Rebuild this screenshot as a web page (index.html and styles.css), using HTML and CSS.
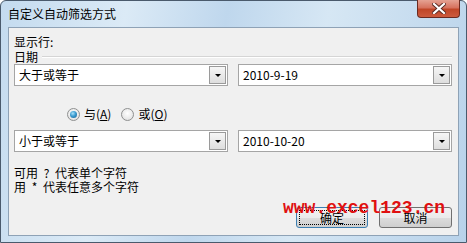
FILE: index.html
```html
<!DOCTYPE html>
<html lang="zh-CN">
<head>
<meta charset="utf-8">
<title>自定义自动筛选方式</title>
<link rel="stylesheet" href="styles.css">
</head>
<body>
<div class="window">
  <div class="titlebar">
    <span class="title">自定义自动筛选方式</span>
    <div class="close">
      <svg width="14" height="11" viewBox="0 0 14 11">
        <path d="M2 1 L12 10 M12 1 L2 10" stroke="#5a2a22" stroke-width="4" stroke-linecap="square"/>
        <path d="M2 1 L12 10 M12 1 L2 10" stroke="#ffffff" stroke-width="2.2" stroke-linecap="square"/>
      </svg>
    </div>
  </div>
  <div class="client">
    <div class="label">显示行:</div>
    <div class="group-label"><span>日期</span><div class="rule"></div></div>
    <div class="combo-row">
      <div class="combo"><span class="value">大于或等于</span><span class="drop"><span class="tri"></span></span></div>
      <div class="combo"><span class="value">2010-9-19</span><span class="drop"><span class="tri"></span></span></div>
    </div>
    <div class="radio-row">
      <div class="radio checked"><span class="dot"></span><span>与(<u>A</u>)</span></div>
      <div class="radio"><span class="dot"></span><span>或(<u>O</u>)</span></div>
    </div>
    <div class="combo-row second">
      <div class="combo"><span class="value">小于或等于</span><span class="drop"><span class="tri"></span></span></div>
      <div class="combo"><span class="value">2010-10-20</span><span class="drop"><span class="tri"></span></span></div>
    </div>
    <p class="hint">可用 ? 代表单个字符<br>用 * 代表任意多个字符</p>
    <div class="buttons">
      <div class="btn default"><span class="focus">确定</span></div>
      <div class="btn cancel">取消</div>
      <div class="watermark">www.excel123.cn</div>
    </div>
  </div>
</div>
</body>
</html>
```
FILE: styles.css
```css
* { box-sizing: border-box; }
html, body { margin: 0; padding: 0; }
body {
  width: 467px;
  height: 243px;
  overflow: hidden;
  background: #ffffff;
  font-family: "Noto Sans CJK SC", "Noto Sans", sans-serif;
  font-size: 12px;
  color: #000;
}
.window {
  position: relative;
  width: 467px;
  height: 243px;
  border: 1px solid #4a5a6c;
  border-radius: 6px 6px 0 0;
  background: linear-gradient(100deg, #c4dbef 0%, #dbeaf6 25%, #bfd7ed 45%, #d6e7f4 65%, #b8d2ea 100%);
  display: flex;
  flex-direction: column;
  padding: 0 7px 6px 7px;
}
.titlebar {
  height: 26px;
  display: flex;
  align-items: center;
  position: relative;
}
.title {
  line-height: 14px;
  color: #000;
}
.close {
  position: absolute;
  right: -1px;
  top: -1px;
  width: 43px;
  height: 18px;
  border: 1px solid #6b2a20;
  border-top: none;
  border-radius: 0 0 4px 4px;
  background: linear-gradient(#e5a293 0%, #d6725e 45%, #c04628 55%, #cc5b3e 100%);
  display: flex;
  align-items: center;
  justify-content: center;
}
.client {
  flex: 1;
  border: 1px solid #8ea2b6;
  background: #f0f0f0;
  padding: 6px 6px 0 5px;
  display: flex;
  flex-direction: column;
}
.label { line-height: 15px; }
.group-label {
  line-height: 15px;
  display: flex;
  align-items: center;
}
.rule {
  flex: 1;
  height: 2px;
  margin: 0 0 0 4px;
  border-top: 1px solid #d5d5d5;
  border-bottom: 1px solid #ffffff;
}
.combo-row {
  display: flex;
  gap: 10px;
}
.combo {
  width: 214px;
  height: 22px;
  border: 1px solid #a5a5a5;
  background: #fff;
  display: flex;
  align-items: center;
  padding: 1px;
}
.value {
  flex: 1;
  padding-left: 3px;
  line-height: 14px;
}
.drop {
  width: 17px;
  height: 100%;
  border: 1px solid #9a9a9a;
  background: linear-gradient(#f6f6f6, #dedede);
  display: flex;
  align-items: center;
  justify-content: center;
}
.tri {
  width: 0;
  height: 0;
  border-left: 3px solid transparent;
  border-right: 3px solid transparent;
  border-top: 3px solid #000;
}
.radio-row {
  margin-top: 20px;
  height: 16px;
  display: flex;
  align-items: center;
  padding-left: 53px;
}
.radio {
  display: flex;
  align-items: center;
  gap: 4px;
  margin-right: 10px;
  line-height: 14px;
}
.dot {
  width: 13px;
  height: 13px;
  border-radius: 50%;
  border: 1px solid #8f9090;
  background: radial-gradient(circle at 50% 40%, #ffffff 0%, #e6e6e6 70%, #d6d6d6 100%);
  display: flex;
  align-items: center;
  justify-content: center;
}
.radio.checked .dot::after {
  content: "";
  width: 7px;
  height: 7px;
  border-radius: 50%;
  background: radial-gradient(circle at 40% 35%, #a8e0f8 0%, #3a9bd0 45%, #1a5f8e 100%);
}
.combo-row.second { margin-top: 8px; }
.hint {
  margin: 14px 0 0 0;
  line-height: 14px;
  word-spacing: 3px;
}
.buttons {
  position: relative;
  margin-top: 13px;
  display: flex;
  justify-content: flex-end;
  gap: 11px;
}
.btn {
  width: 73px;
  height: 21px;
  border: 1px solid #707070;
  border-radius: 3px;
  background: linear-gradient(#f2f2f2 0%, #ebebeb 50%, #dddddd 51%, #cfcfcf 100%);
  display: flex;
  align-items: center;
  justify-content: center;
  line-height: 14px;
}
.btn.default {
  width: 72px;
  border-color: #3c7fb1;
  padding: 2px;
}
.focus {
  width: 100%;
  height: 100%;
  border: 1px dotted #000;
  display: flex;
  align-items: center;
  justify-content: center;
}
.watermark {
  position: absolute;
  left: 269px;
  top: -8px;
  font-family: "Liberation Mono", "Courier New", monospace;
  font-weight: bold;
  font-size: 18px;
  line-height: 18px;
  color: #e01010;
  white-space: nowrap;
}
```
